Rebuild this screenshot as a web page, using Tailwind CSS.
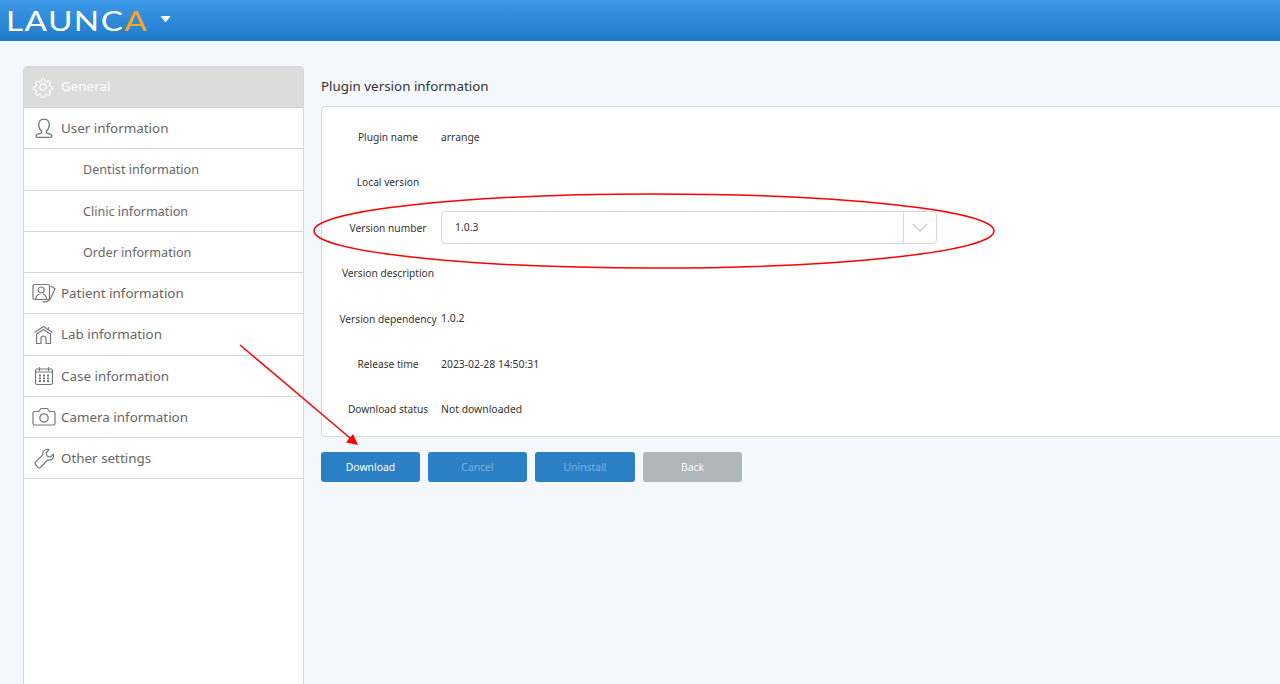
<!DOCTYPE html>
<html>
<head>
    <title>Launca settings</title>
    <script src="https://cdn.jsdelivr.net/npm/@tailwindcss/browser@4"></script>
</head>
<body class="bg-[#f4f7fc] font-['Noto_Sans','Open_Sans',sans-serif]">
<div class="relative h-[684px] w-[1280px] overflow-hidden flex flex-col">

    <!-- Top bar -->
    <header class="h-[41px] shrink-0 flex items-center pl-[6px] bg-gradient-to-b from-[#3d9ae8] to-[#1f7aca]">
        <span class="w-[144px] mb-[1px] origin-left scale-x-[1.23] font-['Lato',sans-serif] font-normal text-[27px] leading-none tracking-[1.2px] text-white whitespace-nowrap">LAUNC<span class="text-[#f5a623]">A</span></span>
        <svg class="ml-[10px] mt-[-3px]" width="11" height="8" viewBox="0 0 11 8"><path d="M0.5 1h10L5.5 7.5z" fill="#fff"/></svg>
    </header>

    <div class="flex-1 flex min-h-0 pl-[23px] pt-[25px]">
        <!-- Sidebar -->
        <nav class="w-[281px] shrink-0 bg-white border border-[#d3d8de] rounded-t-[4px] text-[13.4px] text-[#666] overflow-hidden mb-[-6px]">
            <div class="h-[41px] flex items-center bg-[#dcdcdc] border-b border-[#cfcfcf] text-white">
                <span class="w-[37px] flex justify-end pr-[7px]">
                    <svg width="22" height="22" viewBox="0 0 24 24" fill="none" stroke="#fff" stroke-width="1.3" stroke-linejoin="round"><circle cx="12" cy="12" r="3.4"/><path d="M10.3 2.2h3.4l.6 2.9 1.9.8 2.5-1.6 2.4 2.4-1.6 2.5.8 1.9 2.9.6v3.4l-2.9.6-.8 1.9 1.6 2.5-2.4 2.4-2.5-1.6-1.9.8-.6 2.9h-3.4l-.6-2.9-1.9-.8-2.5 1.6-2.4-2.4 1.6-2.5-.8-1.9-2.9-.6v-3.4l2.9-.6.8-1.900-1.600-2.500 2.400-2.400 2.500 1.600 1.900-.8z" transform="translate(1.2 1.2) scale(.9)"/></svg>
                </span>
                <span class="pb-[2px]">General</span>
            </div>
            <div class="h-[41.25px] flex items-center border-b border-[#d6d6d6]">
                <span class="w-[37px] flex justify-end pr-[6px]">
                    <svg width="22" height="22" viewBox="0 0 22 22" fill="none" stroke="#777" stroke-width="1.3"><path d="M11 2c-3.3 0-5.3 2.500-5.300 5.800 0 2.700 1.200 5 2.800 6.300v1.900c-1.500.8-5.500 1-5.500 3 0 .8.600 1.300 1.500 1.300h13c.9 0 1.500-.5 1.500-1.300 0-2-4-2.200-5.500-3v-1.900c1.600-1.300 2.800-3.600 2.800-6.300C16.300 4.500 14.300 2 11 2z"/></svg>
                </span>
                <span class="pb-[1px]">User information</span>
            </div>
            <div class="h-[41.25px] flex items-center border-b border-[#d6d6d6] pl-[59px] pt-[2px] text-[12.6px]">Dentist information</div>
            <div class="h-[41.25px] flex items-center border-b border-[#d6d6d6] pl-[59px] pt-[3px] text-[12.6px]">Clinic information</div>
            <div class="h-[41.25px] flex items-center border-b border-[#d6d6d6] pl-[59px] pt-[3px] text-[12.6px]">Order information</div>
            <div class="h-[41.25px] flex items-center border-b border-[#d6d6d6]">
                <span class="w-[37px] flex justify-end pr-[5px]">
                    <svg width="24" height="20" viewBox="0 0 24 20" fill="none" stroke="#777" stroke-width="1.2" stroke-linejoin="round"><rect x="1" y="1.500" width="16.500" height="15" rx="1.500"/><circle cx="9.200" cy="7" r="3"/><path d="M3.800 16c0-3.300 2-4.300 3.700-5M14.600 16c0-3.300-2-4.300-3.700-5"/><path d="M18.500 3l4.500 2.800-5 11-3.500 2h-4"/></svg>
                </span>
                <span class="pb-[1px]">Patient information</span>
            </div>
            <div class="h-[41.25px] flex items-center border-b border-[#d6d6d6]">
                <span class="w-[37px] flex justify-end pr-[7px]">
                    <svg width="21" height="21" viewBox="0 0 21 21" fill="none" stroke="#777" stroke-width="1.2" stroke-linejoin="round"><path d="M1.500 8.500l9-6 9 6M3.500 10l7-4.500 7 4.500v9.500h-4.500v-5a2.500 2.500 0 0 0-5 0v5H3.500z"/><path d="M15.500 3v2.500"/></svg>
                </span>
                <span class="pb-[1px]">Lab information</span>
            </div>
            <div class="h-[41.25px] flex items-center border-b border-[#d6d6d6]">
                <span class="w-[37px] flex justify-end pr-[7px]">
                    <svg width="20" height="20" viewBox="0 0 20 20" fill="none" stroke="#777" stroke-width="1.200"><rect x="1.500" y="3" width="17" height="15.500" rx="1.500"/><path d="M5.500 1v4M14.500 1v4M1.500 6h17"/><path stroke-width="1.800" d="M5 9.500h2M9 9.500h2M13 9.500h2M5 12.300h2M9 12.300h2M13 12.300h2M5 15h2M9 15h2M13 15h2"/></svg>
                </span>
                <span>Case information</span>
            </div>
            <div class="h-[41.25px] flex items-center border-b border-[#d6d6d6]">
                <span class="w-[37px] flex justify-end pr-[5px]">
                    <svg width="24" height="19" viewBox="0 0 24 19" fill="none" stroke="#777" stroke-width="1.200" stroke-linejoin="round"><path d="M2.500 4.500h4.200L9 1.500h6.500l2 3h4a1.500 1.500 0 0 1 1.500 1.500v10.500a1.500 1.500 0 0 1-1.500 1.500h-19A1.500 1.500 0 0 1 1 16.500V6a1.500 1.500 0 0 1 1.500-1.500z"/><circle cx="12" cy="11" r="4.200"/></svg>
                </span>
                <span>Camera information</span>
            </div>
            <div class="h-[41.25px] flex items-center border-b border-[#d6d6d6]">
                <span class="w-[37px] flex justify-end pr-[6px]">
                    <svg width="21" height="21" viewBox="0 0 21 21" fill="none" stroke="#777" stroke-width="1.200" stroke-linejoin="round"><path d="M12.500 1.500c-2.700.3-4.300 2.800-3.700 5.400L1.500 14.200c-.7.700-.7 1.600 0 2.300l2.600 2.800c.7.700 1.700.7 2.400 0l7.200-7.300c3 .8 6-1.300 6-4.400 0-.6-.1-1.100-.3-1.500l-3 2.900-3.400-.9-.9-3.400 3-2.900c-.8-.3-1.600-.4-2.600-.3z"/></svg>
                </span>
                <span class="pb-[1px]">Other settings</span>
            </div>
        </nav>

        <!-- Plugin details -->
        <main class="flex-1 min-w-0 pl-[17px] text-[10.4px] text-[#333]">
            <h1 class="h-[40px] flex items-center text-[13.4px] text-[#333]">Plugin version information</h1>
            <section class="w-[1000px] h-[331px] bg-white border border-[#d5d8dc] rounded-l-[4px] pt-[8px] flex flex-col">
                <div class="h-[45.4px] flex items-center"><span class="w-[115px] pl-[17px] text-center text-[10.2px] whitespace-nowrap">Plugin name</span><span class="ml-[4px]">arrange</span></div>
                <div class="h-[45.4px] flex items-center"><span class="w-[115px] pl-[17px] text-center text-[10.2px] whitespace-nowrap">Local version</span></div>
                <div class="h-[45.4px] flex items-center"><span class="w-[115px] pl-[17px] text-center text-[10.2px] whitespace-nowrap">Version number</span>
                    <div class="ml-[4px] mt-[-1px] w-[496px] h-[33px] flex items-center border border-[#d5d8dc] rounded-[4px]">
                        <span class="flex-1 pl-[13px]">1.0.3</span>
                        <span class="w-[33px] h-full flex items-center justify-center border-l border-[#d5d8dc]">
                            <svg width="16" height="9" viewBox="0 0 16 9" fill="none" stroke="#c4c8cc" stroke-width="1.300"><path d="M1 1l7 7 7-7"/></svg>
                        </span>
                    </div>
                </div>
                <div class="h-[45.4px] flex items-center"><span class="w-[115px] pl-[17px] text-center text-[10.2px] whitespace-nowrap">Version description</span></div>
                <div class="h-[45.4px] flex items-center"><span class="w-[115px] pl-[17px] text-center text-[10.2px] whitespace-nowrap">Version dependency</span><span class="ml-[4px]">1.0.2</span></div>
                <div class="h-[45.4px] flex items-center"><span class="w-[115px] pl-[17px] text-center text-[10.2px] whitespace-nowrap">Release time</span><span class="ml-[4px]">2023-02-28 14:50:31</span></div>
                <div class="h-[45.4px] flex items-center"><span class="w-[115px] pl-[17px] text-center text-[10.2px] whitespace-nowrap">Download status</span><span class="ml-[4px]">Not downloaded</span></div>
            </section>
            <div class="mt-[15px] flex gap-[8px]">
                <button class="w-[99px] h-[30px] pt-[1px] rounded-[3px] bg-[#2b7fc5] text-white">Download</button>
                <button class="w-[99px] h-[30px] pt-[1px] rounded-[3px] bg-[#2b7fc5] text-[#7fb2de]">Cancel</button>
                <button class="w-[100px] h-[30px] pt-[1px] rounded-[3px] bg-[#2b7fc5] text-[#7fb2de]">Uninstall</button>
                <button class="w-[99px] h-[30px] pt-[1px] rounded-[3px] bg-[#aeb6bb] text-white">Back</button>
            </div>
        </main>
    </div>

    <!-- Red annotations drawn over the screenshot -->
    <svg class="absolute left-0 top-0 pointer-events-none" width="1280" height="684" viewBox="0 0 1280 684" fill="none">
        <ellipse cx="654" cy="231" rx="340" ry="37" stroke="#ff0000" stroke-width="1.500"/>
        <path d="M240 345L350 438" stroke="#ff0000" stroke-width="1.500"/>
        <path d="M358 445L346 442.500L353 434z" fill="#ff0000"/>
    </svg>
</div>
</body>
</html>
